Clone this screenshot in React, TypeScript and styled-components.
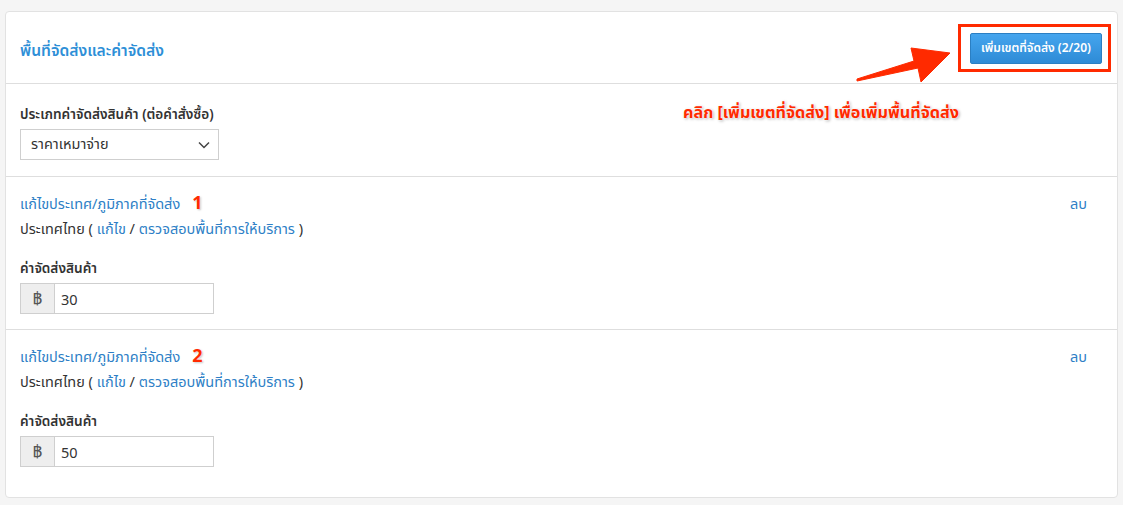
import React from 'react'
import styled, { createGlobalStyle } from 'styled-components'

const GlobalStyle = createGlobalStyle`
  html, body {
    margin: 0;
    padding: 0;
    background: #f5f5f5;
    font-family: "Noto Sans", "Noto Sans Thai", "Tahoma", sans-serif;
    font-size: 14.5px;
    color: #333;
  }
`

const Page = styled.div`
  padding: 11px 5px 8px 5px;
`

const Card = styled.div`
  position: relative;
  background: #fff;
  border: 1px solid #e2e2e2;
  border-radius: 4px;
  padding-bottom: 15px;
`

const Header = styled.div`
  display: flex;
  align-items: center;
  justify-content: space-between;
  height: 71px;
  padding: 0 6px 0 14px;
  border-bottom: 1px solid #dedede;
`

const Title = styled.h3`
  margin: 0;
  padding-top: 6px;
  font-size: 15.6px;
  font-weight: 600;
  color: #2e8fd7;
`

const AddButton = styled.button`
  height: 31px;
  padding: 0 10px;
  border: 1px solid #2b7fc3;
  border-radius: 2px;
  background: linear-gradient(#45a5ee, #2e8bd6);
  color: #fff;
  font-family: inherit;
  font-size: 12px;
  font-weight: 600;
  cursor: pointer;
`

const Highlight = styled.div`
  padding: 6px 6px 5px 9px;
  border: 3px solid #ff2a00;
  line-height: 0;
`

const Section = styled.div<{ $last?: boolean }>`
  padding: 16px 14px 15px 14px;
  border-bottom: ${p => (p.$last ? 'none' : '1px solid #dedede')};
`

const TypeSection = styled(Section)`
  padding-top: 20px;
  padding-bottom: 16px;
`

const Label = styled.div<{ $gap?: number }>`
  font-size: 13.6px;
  font-weight: 600;
  line-height: 20px;
  margin-top: ${p => p.$gap ?? 0}px;
  margin-bottom: 5px;
`

const SelectBox = styled.div`
  display: flex;
  align-items: center;
  justify-content: space-between;
  width: 199px;
  height: 31px;
  padding: 0 8px 0 10px;
  box-sizing: border-box;
  border: 1px solid #cfcfcf;
  margin-top: 3px;
`

const ZoneTop = styled.div`
  display: flex;
  justify-content: space-between;
  line-height: 20px;
  padding-right: 16px;
`

const Link = styled.a`
  color: #2e7fc6;
  text-decoration: none;
  cursor: pointer;
`

const Badge = styled.span`
  margin-left: 12px;
  color: #ff2a00;
  font-weight: 700;
  font-size: 18px;
  line-height: 18px;
  text-shadow: 0 0 2px #fff, 1px 1px 2px #bbb;
`

const InfoLine = styled.div`
  line-height: 20px;
  margin-top: 5px;
`

const InputGroup = styled.div`
  display: flex;
  width: 194px;
  height: 31px;
  border: 1px solid #cfcfcf;
  box-sizing: border-box;
`

const Addon = styled.span`
  display: flex;
  align-items: center;
  justify-content: center;
  width: 33px;
  background: #eee;
  border-right: 1px solid #cfcfcf;
  color: #555;
  font-size: 17px;
`

const Value = styled.span`
  display: flex;
  align-items: center;
  padding-left: 6px;
  color: #333;
`

const Note = styled.div`
  position: absolute;
  left: 677px;
  top: 89px;
  color: #ff2a00;
  font-size: 16.2px;
  font-weight: 700;
  text-shadow: 0 0 2px #fff, 0 0 3px #fff, 1px 1px 3px #999;
`

const Arrow = styled.svg`
  position: absolute;
  left: 0;
  top: 0;
  pointer-events: none;
`

const zones = [
  { n: '1', price: '30' },
  { n: '2', price: '50' },
]

export default function App() {
  return (
    <Page>
      <GlobalStyle />
      <Card>
        <Header>
          <Title>พื้นที่จัดส่งและค่าจัดส่ง</Title>
          <Highlight>
            <AddButton>เพิ่มเขตที่จัดส่ง (2/20)</AddButton>
          </Highlight>
        </Header>
        <TypeSection>
          <Label>ประเภทค่าจัดส่งสินค้า (ต่อคำสั่งซื้อ)</Label>
          <SelectBox>
            <span>ราคาเหมาจ่าย</span>
            <svg width="12" height="8" viewBox="0 0 12 8">
              <path d="M1 1.5 L6 6.5 L11 1.5" fill="none" stroke="#444" strokeWidth="1.5" />
            </svg>
          </SelectBox>
        </TypeSection>
        {zones.map((z, i) => (
          <Section key={z.n} $last={i === zones.length - 1}>
            <ZoneTop>
              <span>
                <Link>แก้ไขประเทศ/ภูมิภาคที่จัดส่ง</Link>
                <Badge>{z.n}</Badge>
              </span>
              <Link>ลบ</Link>
            </ZoneTop>
            <InfoLine>
              ประเทศไทย ( <Link>แก้ไข</Link> / <Link>ตรวจสอบพื้นที่การให้บริการ</Link> )
            </InfoLine>
            <Label $gap={20}>ค่าจัดส่งสินค้า</Label>
            <InputGroup>
              <Addon>฿</Addon>
              <Value>{z.price}</Value>
            </InputGroup>
          </Section>
        ))}
        <Note>คลิก [เพิ่มเขตที่จัดส่ง] เพื่อเพิ่มพื้นที่จัดส่ง</Note>
        <Arrow width="1113" height="120" viewBox="6 12 1113 120">
          <polygon
            points="857,79 914,61 911,48 950,53 921,82 918,68 857,81"
            fill="#ff2a00"
            stroke="#ff2a00"
            strokeWidth="1"
            strokeLinejoin="round"
          />
        </Arrow>
      </Card>
    </Page>
  )
}
